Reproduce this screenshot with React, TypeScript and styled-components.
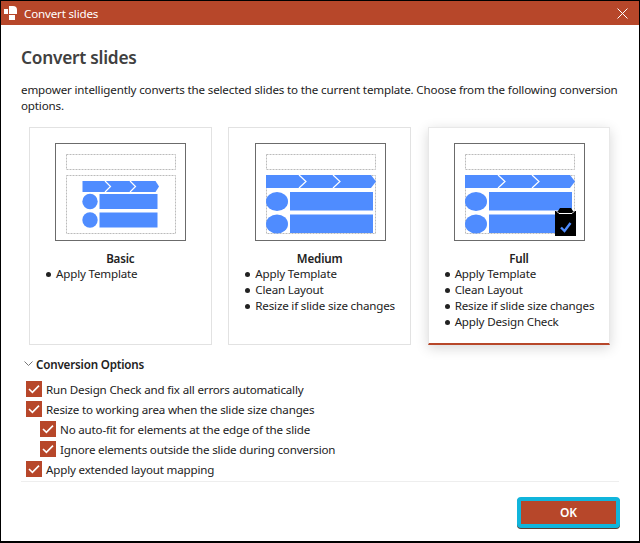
import React from "react";
import styled, { createGlobalStyle } from "styled-components";

const accent = "#b7472a";

const GlobalStyle = createGlobalStyle`
  html, body {
    margin: 0;
    padding: 0;
    background: #fff;
  }
  * {
    box-sizing: border-box;
  }
`;

const Window = styled.div`
  width: 640px;
  height: 543px;
  display: flex;
  flex-direction: column;
  border: 1px solid #000;
  border-bottom-width: 2px;
  background: #fff;
  color: #222;
  font-family: "Noto Sans", "Open Sans", sans-serif;
  font-size: 11.6px;
  letter-spacing: -0.18px;
  overflow: hidden;
`;
const TitleBar = styled.div`
  height: 24px;
  flex: none;
  display: flex;
  align-items: center;
  padding: 0 11px 0 3px;
  background: ${accent};
  color: #fff;
`;
const TitleText = styled.span`
  margin-left: 6px;
  flex: 1;
`;
const Content = styled.div`
  flex: 1;
  display: flex;
  flex-direction: column;
  padding: 20px 20px 0 20px;
`;
const Heading = styled.h1`
  margin: 0;
  font-size: 17.3px;
  line-height: 26px;
  font-weight: 600;
  color: #404040;
  letter-spacing: -0.25px;
`;
const Description = styled.p`
  margin: 11px 0 0;
  line-height: 16px;
  letter-spacing: -0.155px;
`;
const Cards = styled.div`
  display: flex;
  margin: 13px 0 0 8px;
  gap: 16.67px;
`;
const Card = styled.div<{ $selected?: boolean }>`
  width: 182.67px;
  height: 218px;
  padding: 15px 16px 0;
  border: 1px solid ${(p) => (p.$selected ? "#e8e8e8" : "#e2e2e2")};
  border-bottom: ${(p) => (p.$selected ? `2px solid ${accent}` : "1px solid #e2e2e2")};
  box-shadow: ${(p) => (p.$selected ? "0 3px 12px rgba(0, 0, 0, 0.16)" : "none")};
`;
const Thumb = styled.svg`
  display: block;
  margin-left: 9.2px;
  width: 131px;
  height: 98px;
`;
const CardTitle = styled.div`
  margin-top: 10px;
  font-weight: 600;
  line-height: 16px;
  text-align: center;
`;
const BulletList = styled.ul`
  margin: -1px 0 0;
  padding: 0;
  list-style: none;
`;
const Bullet = styled.li`
  display: flex;
  line-height: 16px;
  white-space: nowrap;
  &::before {
    content: "";
    flex: none;
    width: 5px;
    height: 5px;
    margin: 6px 5px 0 0;
    border-radius: 50%;
    background: #222;
  }
`;
const Options = styled.div`
  margin: 11px 0 0 3px;
`;
const OptionsHeader = styled.div`
  display: flex;
  align-items: center;
  gap: 3px;
  height: 16px;
  font-weight: 600;
`;
const OptionList = styled.div`
  margin-top: 7px;
`;
const OptionRow = styled.label<{ $nested?: boolean }>`
  display: flex;
  align-items: center;
  gap: 4px;
  height: 20px;
  padding-left: ${(p) => (p.$nested ? "16px" : "2px")};
`;
const CheckBox = styled.span`
  width: 16px;
  height: 16px;
  flex: none;
  display: flex;
  align-items: center;
  justify-content: center;
  background: ${accent};
`;
const Divider = styled.div`
  height: 1px;
  margin-top: 2px;
  background: #eeeeee;
`;
const Footer = styled.div`
  display: flex;
  justify-content: flex-end;
  margin: 15px -1px 0 0;
`;
const OkButton = styled.button`
  width: 103px;
  height: 31px;
  padding: 0;
  border: 4px solid #10b5dc;
  border-radius: 4px;
  background: ${accent};
  color: #fff;
  font-family: inherit;
  font-size: 12px;
  font-weight: 600;
  box-shadow: 0 1px 0 #5a3a30;
`;

const Logo = () => (
  <svg width="14" height="16" viewBox="0 0 14 16">
    <path d="M5 1h4a4 4 0 0 1 4 4v4H5z" fill="#fff" />
    <rect x="0" y="4" width="4" height="5" fill="#fff" />
    <rect x="5" y="10" width="6" height="5" fill="#fff" />
  </svg>
);

const CloseIcon = () => (
  <svg width="11" height="11" viewBox="0 0 11 11">
    <path d="M0.5 0.5l10 10M10.5 0.5l-10 10" stroke="#fff" strokeWidth="1" fill="none" />
  </svg>
);

const Chevron = () => (
  <svg width="9" height="6" viewBox="0 0 9 6">
    <path d="M0.5 0.5l4 4 4-4" stroke="#777" strokeWidth="1" fill="none" />
  </svg>
);

const Tick = () => (
  <svg width="12" height="10" viewBox="0 0 12 10">
    <path d="M1 5l3.4 3.4L11 1.6" stroke="#fff" strokeWidth="1.6" fill="none" />
  </svg>
);

const blue = "#4f8cff";

const Frame = () => (
  <>
    <rect x="0.5" y="0.5" width="130" height="97" fill="#fff" stroke="#6b6b6b" />
    <rect x="11.5" y="11.5" width="109" height="15" fill="none" stroke="#bbb" strokeDasharray="2 1" />
    <rect x="11.5" y="32.5" width="109" height="58" fill="none" stroke="#bbb" strokeDasharray="2 1" />
  </>
);

const BasicThumb = () => (
  <Thumb viewBox="0 0 131 98">
    <Frame />
    <path d="M27.500 38h73l3.500 5.500-3.500 5.500H27.500z" fill={blue} />
    <path d="M50 38l5.500 5.500-5.500 5.500M75 38l5.500 5.500-5.500 5.500" stroke="#fff" strokeWidth="1.200" fill="none" />
    <circle cx="35" cy="58.500" r="7.700" fill={blue} />
    <circle cx="35" cy="77" r="7.700" fill={blue} />
    <rect x="44.500" y="51" width="58" height="15" fill={blue} />
    <rect x="44.500" y="69.500" width="58" height="15" fill={blue} />
  </Thumb>
);

const LargeThumb = ({ check }: { check?: boolean }) => (
  <Thumb viewBox="0 0 131 98">
    <Frame />
    <path d="M11 32h105l5 6.500-5 6.500H11z" fill={blue} />
    <path d="M44 32l7 6.500-7 6.500M78 32l7 6.500-7 6.500" stroke="#fff" strokeWidth="1.200" fill="none" />
    <ellipse cx="22" cy="58.500" rx="11" ry="9.500" fill={blue} />
    <ellipse cx="22" cy="81" rx="11" ry="9.500" fill={blue} />
    <rect x="35" y="49" width="83" height="18.500" fill={blue} />
    <rect x="35" y="71.500" width="83" height="18.500" fill={blue} />
    {check && (
      <>
        <path d="M101 68h3L106 65H117L119 68h3v25H101z" fill="#000" />
        <path d="M102 67.500l3 3h13l3-3" stroke="#fff" fill="none" />
        <path d="M107 84.500l3.500 3.500 6-8" stroke={blue} strokeWidth="2.400" fill="none" />
      </>
    )}
  </Thumb>
);

const conversions = [
  { title: "Basic", items: ["Apply Template"] },
  { title: "Medium", items: ["Apply Template", "Clean Layout", "Resize if slide size changes"] },
  {
    title: "Full",
    items: ["Apply Template", "Clean Layout", "Resize if slide size changes", "Apply Design Check"],
  },
];

const options = [
  { label: "Run Design Check and fix all errors automatically" },
  { label: "Resize to working area when the slide size changes" },
  { label: "No auto-fit for elements at the edge of the slide", nested: true },
  { label: "Ignore elements outside the slide during conversion", nested: true },
  { label: "Apply extended layout mapping" },
];

const App = () => {
  return (
    <Window>
      <GlobalStyle />
      <TitleBar>
        <Logo />
        <TitleText>Convert slides</TitleText>
        <CloseIcon />
      </TitleBar>
      <Content>
        <Heading>Convert slides</Heading>
        <Description>
          empower intelligently converts the selected slides to the current template. Choose from
          the following conversion options.
        </Description>
        <Cards>
          {conversions.map((c, i) => (
            <Card key={c.title} $selected={i === 2}>
              {i === 0 ? <BasicThumb /> : <LargeThumb check={i === 2} />}
              <CardTitle>{c.title}</CardTitle>
              <BulletList>
                {c.items.map((item) => (
                  <Bullet key={item}>{item}</Bullet>
                ))}
              </BulletList>
            </Card>
          ))}
        </Cards>
        <Options>
          <OptionsHeader>
            <Chevron />
            Conversion Options
          </OptionsHeader>
          <OptionList>
            {options.map((o) => (
              <OptionRow key={o.label} $nested={o.nested}>
                <CheckBox>
                  <Tick />
                </CheckBox>
                {o.label}
              </OptionRow>
            ))}
          </OptionList>
        </Options>
        <Divider />
        <Footer>
          <OkButton>OK</OkButton>
        </Footer>
      </Content>
    </Window>
  );
};

export default App;
